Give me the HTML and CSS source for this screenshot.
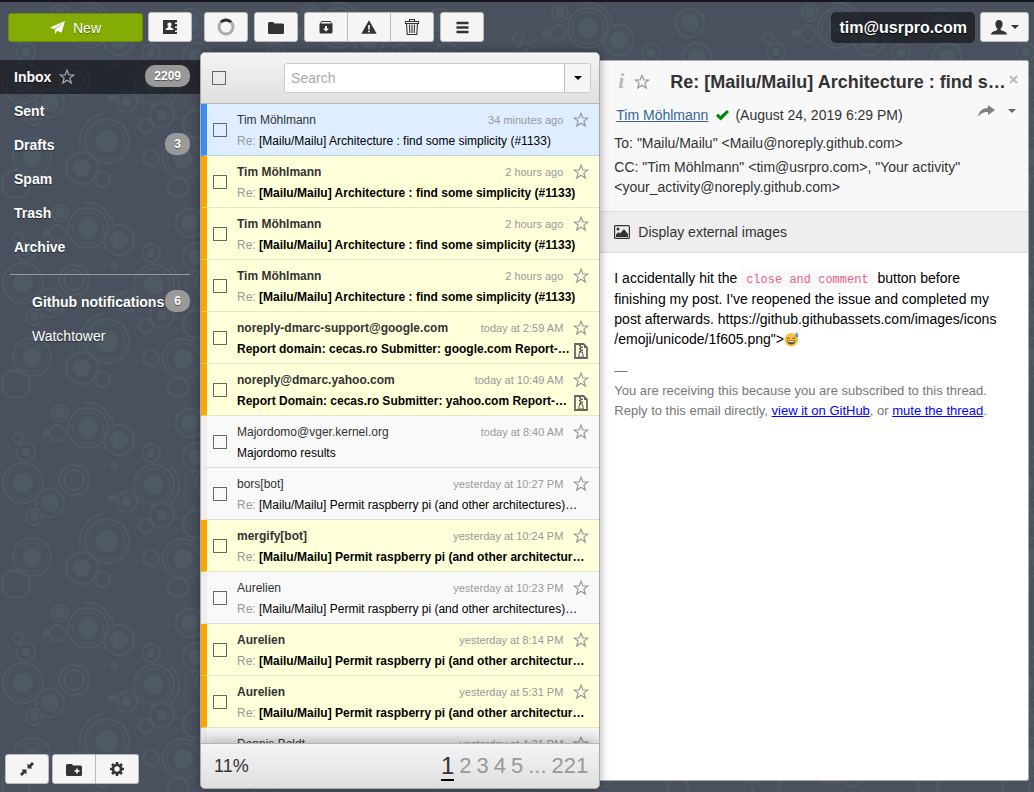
FILE: index.html
```html
<!DOCTYPE html>
<html lang="en">
<head>
<meta charset="utf-8">
<title>Inbox - tim@usrpro.com</title>
<link rel="stylesheet" href="styles.css">
</head>
<body>
<svg class="symbols" aria-hidden="true">
  <symbol id="star" viewBox="0 0 16 16"><path d="M8 1.3 9.900 6h4.800l-3.800 3.100 1.400 5L8 11.300l-4.300 2.800 1.400-5L1.300 6h4.800z" fill="none" stroke="currentColor" stroke-width="1.200"/></symbol>
  <symbol id="zip" viewBox="0 0 14 16"><path d="M1 1h8.500L13 4.500V15H1z" fill="none" stroke="currentColor" stroke-width="1.800"/><path d="M5 2h2v1.500h2V5H7v1.500h2V8H7v1.500H5V8h1V6.500H5V5h1V3.500H5z" fill="currentColor"/><path d="M5.600 9 4.600 14h4.800l-1-5z" fill="none" stroke="currentColor" stroke-width="1.100"/><path d="M10 2v3h3z" fill="currentColor"/></symbol>
  <symbol id="caret" viewBox="0 0 8 4"><path d="M0 0h8L4 4z" fill="currentColor"/></symbol>
</svg>
<div class="app">
  <aside class="sidebar">
    <div class="toolbar">
      <button class="new"><svg width="15" height="13" viewBox="0 0 15 13"><path d="M15 0 0 6.500l4 1.700zM15 0 5 8.500V13l2.200-3.200 4.300 2z" fill="#fff"/></svg>New</button>
      <button class="btn" aria-label="Contacts"><svg width="15" height="15" viewBox="0 0 15 15"><path d="M0 0h12v14H0z" fill="#333"/><path d="M12 0h2v2.500h-2zm0 4h2v2.500h-2zm0 4h2v2.500h-2zm0 4h2v2h-2z" fill="#333"/><path d="M6.500 2.500a2 2 0 0 1 2 2.300c-.1 1-.5 1.500-1 1.900.1 1 3 1 3 3.300h-8c0-2.300 2.900-2.300 3-3.300-.5-.4-1-.9-1-1.900a2 2 0 0 1 2-2.300z" fill="#fff"/></svg></button>
    </div>
    <nav class="folders">
      <a class="folder active" href="#inbox">Inbox<svg class="star" width="16" height="16"><use href="#star"/></svg><span class="badge">2209</span></a>
      <a class="folder" href="#sent">Sent</a>
      <a class="folder" href="#drafts">Drafts<span class="badge">3</span></a>
      <a class="folder" href="#spam">Spam</a>
      <a class="folder" href="#trash">Trash</a>
      <a class="folder" href="#archive">Archive</a>
      <hr>
      <a class="folder sub" href="#github">Github notifications<span class="badge">6</span></a>
      <a class="folder sub plain" href="#watchtower">Watchtower</a>
    </nav>
    <div class="side-foot">
      <button class="btn" aria-label="Collapse"><svg width="14" height="14" viewBox="0 0 14 14"><path d="M7.500 1.500v5h5l-1.500-1.500 3-3L12 0 9 3zM1.500 7.500h5v5L5 11l-3 3-2-2 3-3z" fill="#333"/></svg></button>
      <div class="group">
        <button class="btn" aria-label="Create folder"><svg width="16" height="13" viewBox="0 0 16 13"><path d="M0 2.500Q0 1 1.500 1H6l1 1.500h7.500Q16 2.500 16 4v7.500q0 1.500-1.500 1.500h-13Q0 13 0 11.500z" fill="#333"/><path d="M11 5.500v5M8.500 8h5" stroke="#fff" stroke-width="1.500"/></svg></button>
        <button class="btn" aria-label="Settings"><svg width="14" height="14" viewBox="0 0 14 14"><circle cx="7" cy="7" r="4" fill="none" stroke="#333" stroke-width="2.600"/><path d="M7 0v2.500M7 11.500V14M0 7h2.500M11.500 7H14M2 2l2 2M10 10l2 2M12 2l-2 2M4 10l-2 2" stroke="#333" stroke-width="2.600"/></svg></button>
      </div>
    </div>
  </aside>

  <main class="list-col">
    <div class="toolbar">
      <button class="btn" aria-label="Reload"><svg width="18" height="18" viewBox="0 0 18 18"><circle cx="9" cy="9" r="7" fill="none" stroke="#aaa" stroke-width="3"/><path d="M4 4a7 7 0 0 1 10 0" fill="none" stroke="#333" stroke-width="3"/></svg></button>
      <button class="btn" aria-label="Move"><svg width="16" height="13" viewBox="0 0 16 13"><path d="M0 2.500Q0 1 1.500 1h3Q6 1 6.500 2.500h8Q16 2.500 16 4v7.500q0 1.500-1.500 1.500h-13Q0 13 0 11.500z" fill="#333"/></svg></button>
      <div class="group">
        <button class="btn" aria-label="Archive"><svg width="14" height="14" viewBox="0 0 14 14"><path d="M2.500 1.500h9L13 4H1z" fill="none" stroke="#333"/><path d="M.5 4h13v8q0 1.500-1.500 1.500H2Q.5 13.500.5 12z" fill="#333"/><path d="M6 6h2v2.500h2L7 11.500l-3-3h2z" fill="#fff"/></svg></button>
        <button class="btn" aria-label="Spam"><svg width="16" height="14" viewBox="0 0 16 14"><path d="m8 .3 7.700 13.500H.3z" fill="#333"/><path d="M7.200 5h1.600v4.500H7.200zm0 5.500h1.600v1.800H7.200z" fill="#fff"/></svg></button>
        <button class="btn" aria-label="Delete"><svg width="16" height="16" viewBox="0 0 16 16"><path d="M5.500 2.500v-2h5v2M1.500 2.500h13v2h-13zM2.500 5l.8 10.500h9.400L13.500 5M5.500 5.500l.3 8.500M8 5.500V14M10.500 5.500l-.3 8.500" fill="none" stroke="#333" stroke-width="1.100"/></svg></button>
      </div>
      <button class="btn" aria-label="More"><svg width="13" height="13" viewBox="0 0 13 13"><path d="M.5 2h12M.5 6.500h12M.5 11h12" stroke="#333" stroke-width="2.400"/></svg></button>
    </div>
    <section class="list-panel">
      <header class="list-head">
        <input type="checkbox" class="check" aria-label="Select all">
        <div class="search"><input type="search" placeholder="Search" aria-label="Search"><button aria-label="Advanced search"><svg width="8" height="4"><use href="#caret"/></svg></button></div>
      </header>
      <div class="messages" id="messages"></div>
      <footer class="list-foot">
        <span class="quota">11%</span>
        <nav class="pages"><a class="current" href="#p1">1</a><a href="#p2">2</a><a href="#p3">3</a><a href="#p4">4</a><a href="#p5">5</a><a href="#p6">...</a><a href="#p221">221</a></nav>
      </footer>
    </section>
  </main>

  <section class="view-col">
    <div class="toolbar account">
      <span class="email">tim@usrpro.com</span>
      <button class="btn user" aria-label="Account"><svg width="16" height="15" viewBox="0 0 16 15"><path d="M8 0c2.500 0 3.800 1.700 3.600 4.200C11.400 6.500 10.500 8 9.700 8.600v1.300c1.500 1 6.300 1.300 6.300 4.600H0c0-3.300 4.800-3.600 6.300-4.600V8.600C5.500 8 4.600 6.500 4.400 4.200 4.200 1.700 5.500 0 8 0z" fill="#333"/></svg><svg width="8" height="4"><use href="#caret"/></svg></button>
    </div>
    <article class="mail">
      <header class="mail-head">
        <div class="title-row">
          <span class="info" aria-hidden="true">i</span>
          <svg class="star" width="16" height="16"><use href="#star"/></svg>
          <h1>Re: [Mailu/Mailu] Architecture : find some simplicity (#1133)</h1>
          <button class="close" aria-label="Close"><svg width="9" height="9" viewBox="0 0 9 9"><path d="m1 1 7 7M8 1 1 8" stroke="#bbb" stroke-width="2.200"/></svg></button>
        </div>
        <div class="from-row">
          <a href="#sender">Tim Möhlmann</a>
          <svg width="13" height="12" viewBox="0 0 13 12"><path d="m0 7 2-2.500L4.500 7 11 1l2 2-8.300 8.500z" fill="#080"/></svg>
          <span>(August 24, 2019 6:29 PM)</span>
          <div class="actions">
            <button class="reply" aria-label="Forward"><svg width="17" height="12" viewBox="0 0 17 12"><path d="M10 0l7 5-7 5V7C5 7 2.500 8.500 0 12 .5 7 4 3 10 3z" fill="#808080"/></svg></button>
            <button class="reply" aria-label="More actions"><svg width="8" height="4"><use href="#caret"/></svg></button>
          </div>
        </div>
        <p class="to">To: "Mailu/Mailu" &lt;Mailu@noreply.github.com&gt;</p>
        <p class="cc">CC: "Tim Möhlmann" &lt;tim@usrpro.com&gt;, "Your activity" &lt;your_activity@noreply.github.com&gt;</p>
      </header>
      <button class="images"><svg width="16" height="14" viewBox="0 0 16 14"><rect x=".6" y=".6" width="14.800" height="12.800" rx="1" fill="none" stroke="#333" stroke-width="1.200"/><circle cx="4" cy="4" r="1.500" fill="#333"/><path d="M2 12V9.500L4.500 7 6 8.500 10 4l4 5v3z" fill="#333"/></svg>Display external images</button>
      <div class="mail-body">
        <p>I accidentally hit the <code>close and comment</code> button before finishing my post. I've reopened the issue and completed my post afterwards. https://github.githubassets.com/images/icons<wbr>/emoji/unicode/1f605.png"&gt;<svg class="emoji" role="img" aria-label="Grinning face with sweat" width="15" height="15" viewBox="0 0 15 15"><circle cx="7.300" cy="7.700" r="6.800" fill="#fcc23c"/><path d="M3 6.800q1.200-2 2.600-.2M8.500 6.600q1.500-1.800 2.600.2" fill="none" stroke="#5b4430"/><path d="M3 8.500h8.500q-.3 4-4.200 4T3 8.500z" fill="#5b4430"/><path d="M4 9.200h6.500v1H4z" fill="#fff"/><path d="M12.500 0q3 4 1.200 5.200-1.700.8-2.400-.8Q11 3 12.500 0z" fill="#4a9be8"/></svg></p>
        <div class="signature">—<br>You are receiving this because you are subscribed to this thread.<br>Reply to this email directly, <a href="#github">view it on GitHub</a>, or <a href="#mute">mute the thread</a>.</div>
      </div>
    </article>
  </section>
</div>
<script src="app.js"></script>
</body>
</html>
```
FILE: styles.css
```css
* { box-sizing: border-box; }
body {
  margin: 0;
  font: 14px/20px "Liberation Sans", Arial, sans-serif;
  color: #333;
  background-color: #48515d;
  background-image: url("data:image/svg+xml,%3Csvg xmlns='http://www.w3.org/2000/svg' width='250' height='200'%3E%3Cg fill='none' stroke='%234f5a65' stroke-width='2'%3E%3Ccircle cx='88' cy='28' r='20'/%3E%3Ccircle cx='88' cy='28' r='16' stroke-width='1'/%3E%3Cpath d='M82 3a26 26 0 0 1 30 20'/%3E%3Ccircle cx='119' cy='40' r='15'/%3E%3Ccircle cx='60' cy='13' r='8'/%3E%3Ccircle cx='58' cy='33' r='8'/%3E%3Ccircle cx='18' cy='38' r='5'/%3E%3Ccircle cx='26' cy='52' r='9'/%3E%3Ccircle cx='151' cy='53' r='9'/%3E%3Ccircle cx='190' cy='23' r='14'/%3E%3Ccircle cx='197' cy='57' r='14'/%3E%3Ccircle cx='23' cy='83' r='20'/%3E%3Ccircle cx='23' cy='83' r='16' stroke-width='1'/%3E%3Ccircle cx='74' cy='80' r='15'/%3E%3Ccircle cx='74' cy='80' r='10'/%3E%3Ccircle cx='50' cy='103' r='14'/%3E%3Ccircle cx='34' cy='117' r='8'/%3E%3Ccircle cx='154' cy='85' r='20'/%3E%3Ccircle cx='154' cy='85' r='16' stroke-width='1'/%3E%3Cpath d='M171 66a26 26 0 0 1 0 38'/%3E%3Ccircle cx='127' cy='102' r='10'/%3E%3Ccircle cx='162' cy='115' r='12'/%3E%3Ccircle cx='146' cy='126' r='7'/%3E%3Ccircle cx='107' cy='141' r='22'/%3E%3Ccircle cx='107' cy='141' r='18' stroke-width='1'/%3E%3Cpath d='M80 146a28 28 0 0 1 23-32'/%3E%3Ccircle cx='82' cy='168' r='16'/%3E%3Ccircle cx='102' cy='179' r='8'/%3E%3Ccircle cx='32' cy='157' r='19'/%3E%3Ccircle cx='32' cy='157' r='15' stroke-width='1'/%3E%3Ccircle cx='16' cy='184' r='14'/%3E%3Ccircle cx='151' cy='158' r='8'/%3E%3Ccircle cx='183' cy='159' r='20'/%3E%3Ccircle cx='183' cy='159' r='16' stroke-width='1'/%3E%3Ccircle cx='178' cy='187' r='10'/%3E%3Ccircle cx='197' cy='124' r='14'/%3E%3Ccircle cx='214' cy='83' r='18'/%3E%3C/g%3E%3Cg fill='%234f5964'%3E%3Ccircle cx='88' cy='28' r='10'/%3E%3Ccircle cx='119' cy='40' r='9'/%3E%3Ccircle cx='60' cy='13' r='5'/%3E%3Ccircle cx='26' cy='52' r='4'/%3E%3Ccircle cx='151' cy='53' r='4'/%3E%3Ccircle cx='190' cy='23' r='9'/%3E%3Ccircle cx='197' cy='57' r='8'/%3E%3Ccircle cx='23' cy='83' r='10'/%3E%3Ccircle cx='50' cy='103' r='9'/%3E%3Ccircle cx='34' cy='117' r='4'/%3E%3Ccircle cx='154' cy='85' r='10'/%3E%3Ccircle cx='127' cy='102' r='5'/%3E%3Ccircle cx='162' cy='115' r='5'/%3E%3Ccircle cx='107' cy='141' r='11'/%3E%3Ccircle cx='82' cy='168' r='9'/%3E%3Ccircle cx='32' cy='157' r='9'/%3E%3Ccircle cx='183' cy='159' r='10'/%3E%3Ccircle cx='46' cy='33' r='4'/%3E%3Ccircle cx='115' cy='65' r='4'/%3E%3Ccircle cx='112' cy='98' r='4'/%3E%3C/g%3E%3C/svg%3E");
}
p, h1 { margin: 0; }
a { color: inherit; text-decoration: none; }
button, input { font: inherit; color: inherit; }
button { padding: 0; cursor: pointer; }
svg { flex: none; }
.symbols { display: none; }

.app {
  display: grid;
  grid-template-columns: 200px minmax(0, 24fr) minmax(0, 26fr);
  height: 100vh;
  border-top: 2px solid #17151f;
}
.toolbar { display: flex; gap: 6px; padding: 10px 0 0 4px; height: 50px; flex: none; align-items: flex-start; }
.btn {
  display: flex; align-items: center; justify-content: center; gap: 4px;
  width: 44px; height: 30px;
  background: #f5f5f5; border: 1px solid #bbb; border-radius: 3px;
}
.group { display: flex; }
.group .btn:not(:first-child) { border-left: 0; border-top-left-radius: 0; border-bottom-left-radius: 0; width: 43px; }
.group .btn:not(:last-child) { border-top-right-radius: 0; border-bottom-right-radius: 0; }

/* Sidebar */
.sidebar { display: flex; flex-direction: column; }
.sidebar .toolbar { padding: 10px 8px 0; gap: 5px; height: 58px; }
.new {
  display: flex; align-items: center; justify-content: center; gap: 8px;
  flex: 1; height: 29px; margin-top: 1px;
  color: #fff; background: #85ab05; border: 1px solid #6c8c08; border-radius: 3px;
  text-shadow: 0 1px 1px rgba(0, 0, 0, .4);
}
.folder {
  display: flex; align-items: center; position: relative;
  height: 34px; padding: 0 10px 0 14px;
  color: #fff; font-weight: bold; white-space: nowrap; text-shadow: 0 1px 1px rgba(0, 0, 0, .5);
}
.folder.active { background: rgba(0, 0, 0, .5); }
.folder .star { margin-left: 8px; color: #aaa; }
.folder.sub { padding-left: 32px; }
.folder.plain { font-weight: normal; }
.badge {
  position: absolute; right: 10px; top: 5px;
  min-width: 25px; height: 22px; padding: 0 9px; border-radius: 10px;
  background: #999; font-size: 12px; line-height: 23px; text-align: center;
}
hr { margin: 10px 10px; border: 0; border-top: 1px solid #999; }
.side-foot { display: flex; gap: 3px; margin-top: auto; padding: 0 0 8px 5px; }

/* Message list */
.list-col, .view-col { display: flex; flex-direction: column; min-height: 0; min-width: 0; }
.list-col { position: relative; z-index: 1; }
.list-panel {
  flex: 1; min-height: 0; display: flex; flex-direction: column; overflow: hidden;
  margin-bottom: 3px; background: #f9f9f9; border: 1px solid #aaa; border-radius: 5px;
  box-shadow: 0 0 10px rgba(0, 0, 0, .35);
}
.list-head {
  display: flex; align-items: center; justify-content: space-between;
  height: 51px; padding: 0 8px 0 11px; flex: none;
  background: linear-gradient(#f4f4f4, #dfdfdf); border-bottom: 1px solid #b5b5b5;
}
.check { appearance: none; width: 14px; height: 14px; margin: 0; border: 1px solid #666; flex: none; }
.search { display: flex; width: 81%; height: 30px; border: 1px solid #ccc; border-radius: 3px; background: #fff; overflow: hidden; }
.search input { flex: 1; min-width: 0; border: 0; padding: 0 6px; background: none; outline: 0; }
.search input::placeholder { color: #aaa; }
.search button { width: 26px; border: 0; border-left: 1px solid #bbb; background: #f5f5f5; color: #000; }
.search svg { display: block; margin: auto; }
.messages { flex: 1; min-height: 0; overflow: hidden; }
.message {
  display: grid; grid-template-columns: 14px minmax(0, 1fr) 16px; column-gap: 10px; align-items: center;
  height: 52px; padding: 2px 10px 0 6px;
  border-left: 6px solid #eee; border-bottom: 1px solid #ddd;
  font-size: 12px;
}
.message .check { margin-bottom: 2px; }
.message.unread { background: #ffffd9; border-left-color: #ffa500; border-bottom-color: #e5e5cc; font-weight: bold; }
.message.selected { background: #deedff; border-left-color: #398cf2; border-bottom-color: #c0d4e4; }
.lines { display: grid; grid-template-rows: 21px 21px; line-height: 21px; }
.line { display: flex; justify-content: space-between; }
.date { color: #999; font-size: 11px; font-weight: normal; line-height: 20px; }
.subject { margin-right: -22px; color: #000; white-space: nowrap; overflow: hidden; text-overflow: ellipsis; }
.attached .subject { margin-right: -8px; }
.subject span { color: #999; font-weight: normal; }
.marks { display: grid; grid-template-rows: 21px 21px; align-items: center; justify-items: center; color: #999; }
.marks .zip { color: #666; margin-top: 4px; }
.list-foot {
  display: flex; align-items: center; justify-content: space-between;
  height: 45px; padding: 0 11px 0 13px; flex: none; position: relative;
  background: linear-gradient(#f4f4f4, #dfdfdf); border-top: 1px solid #b5b5b5;
  box-shadow: 0 -3px 15px rgba(0, 0, 0, .3);
}
.quota { font-size: 18px; }
.pages { display: flex; gap: 5px; font-size: 22px; line-height: 26px; color: #999; }
.pages a { border-bottom: 2px solid transparent; padding-top: 1px; }
.pages .current { color: #333; border-color: #000; font-size: 24px; }

/* Message view */
.view-col { padding-right: 5px; }
.account { justify-content: flex-end; gap: 5px; padding-left: 0; height: 58px; }
.email {
  height: 31px; padding: 0 8px; border-radius: 5px; background: rgba(0, 0, 0, .5);
  color: #fff; font-size: 16px; font-weight: bold; line-height: 32px; text-shadow: 0 1px 1px #000;
}
.user { width: 49px; }
.mail { flex: 1; min-height: 0; margin-bottom: 11px; background: #fff; border: 1px solid #aaa; border-left: 0; border-radius: 0 3px 3px 0; overflow: hidden; }
.mail-head { background: #f8f8f8; padding: 9px 10px 14px 14px; border-bottom: 1px solid #ddd; }
.title-row { display: flex; align-items: center; height: 24px; }
.info { width: 20px; padding-left: 4px; font: italic bold 22px/20px "Liberation Serif", serif; color: #bbb; margin-bottom: 2px; }
.title-row .star { color: #999; }
.title-row h1 { flex: 1; min-width: 0; margin-left: 20px; font-size: 18px; line-height: 24px; white-space: nowrap; overflow: hidden; text-overflow: ellipsis; }
.close { display: flex; border: 0; background: none; margin-bottom: 6px; }
.from-row { display: flex; align-items: center; gap: 6px; margin: 10px 2px 0; height: 22px; }
.from-row a { color: #369; text-decoration: underline; margin-right: 2px; }
.actions { display: flex; align-items: center; gap: 13px; height: 12px; margin: 0 0 8px auto; }
.reply { display: flex; border: 0; background: none; color: #666; }
.to { margin-top: 7px; }
.cc { margin-top: 4px; }
.images { display: flex; align-items: center; gap: 8px; width: 100%; height: 41px; padding: 0 14px; background: #eee; border: 0; border-bottom: 1px solid #ddd; }
.mail-body { padding: 15px 24px 15px 14px; color: #000; }
code { font: 12px/18px "Liberation Mono", monospace; color: #e8628a; background: #f9f9f9; padding: 2px 5px; }
.emoji { vertical-align: -3px; }
.signature { margin-top: 12px; font-size: 13px; color: #777; }
.signature a { color: #00f; text-decoration: underline; }
```
FILE: app.js
```javascript
const topic = "[Mailu/Mailu] Architecture : find some simplicity (#1133)";
const permit = "[Mailu/Mailu] Permit raspberry pi (and other architectures)…";
const mails = [
  ["Tim Möhlmann", "34 minutes ago", "Re:", topic, "selected"],
  ["Tim Möhlmann", "2 hours ago", "Re:", topic, "unread"],
  ["Tim Möhlmann", "2 hours ago", "Re:", topic, "unread"],
  ["Tim Möhlmann", "2 hours ago", "Re:", topic, "unread"],
  ["noreply-dmarc-support@google.com", "today at 2:59 AM", "", "Report domain: cecas.ro Submitter: google.com Report-…", "unread", true],
  ["noreply@dmarc.yahoo.com", "today at 10:49 AM", "", "Report Domain: cecas.ro Submitter: yahoo.com Report-…", "unread", true],
  ["Majordomo@vger.kernel.org", "today at 8:40 AM", "", "Majordomo results", ""],
  ["bors[bot]", "yesterday at 10:27 PM", "Re:", permit, ""],
  ["mergify[bot]", "yesterday at 10:24 PM", "Re:", permit, "unread"],
  ["Aurelien", "yesterday at 10:23 PM", "Re:", permit, ""],
  ["Aurelien", "yesterday at 8:14 PM", "Re:", permit, "unread"],
  ["Aurelien", "yesterday at 5:31 PM", "Re:", permit, "unread"],
  ["Dennis Boldt", "yesterday at 4:31 PM", "Re:", permit, ""]
];
document.getElementById("messages").innerHTML = mails.map(([from, date, prefix, subject, state, zip]) => `
  <div class="message ${state} ${zip ? "attached" : ""}">
    <input type="checkbox" class="check" aria-label="Select message from ${from}">
    <div class="lines">
      <div class="line"><span class="sender">${from}</span><span class="date">${date}</span></div>
      <div class="subject">${prefix ? `<span>${prefix}</span> ` : ""}${subject}</div>
    </div>
    <div class="marks"><svg width="16" height="16"><use href="#star"/></svg>${zip ? '<svg class="zip" width="14" height="16"><use href="#zip"/></svg>' : ""}</div>
  </div>`).join("");
```
